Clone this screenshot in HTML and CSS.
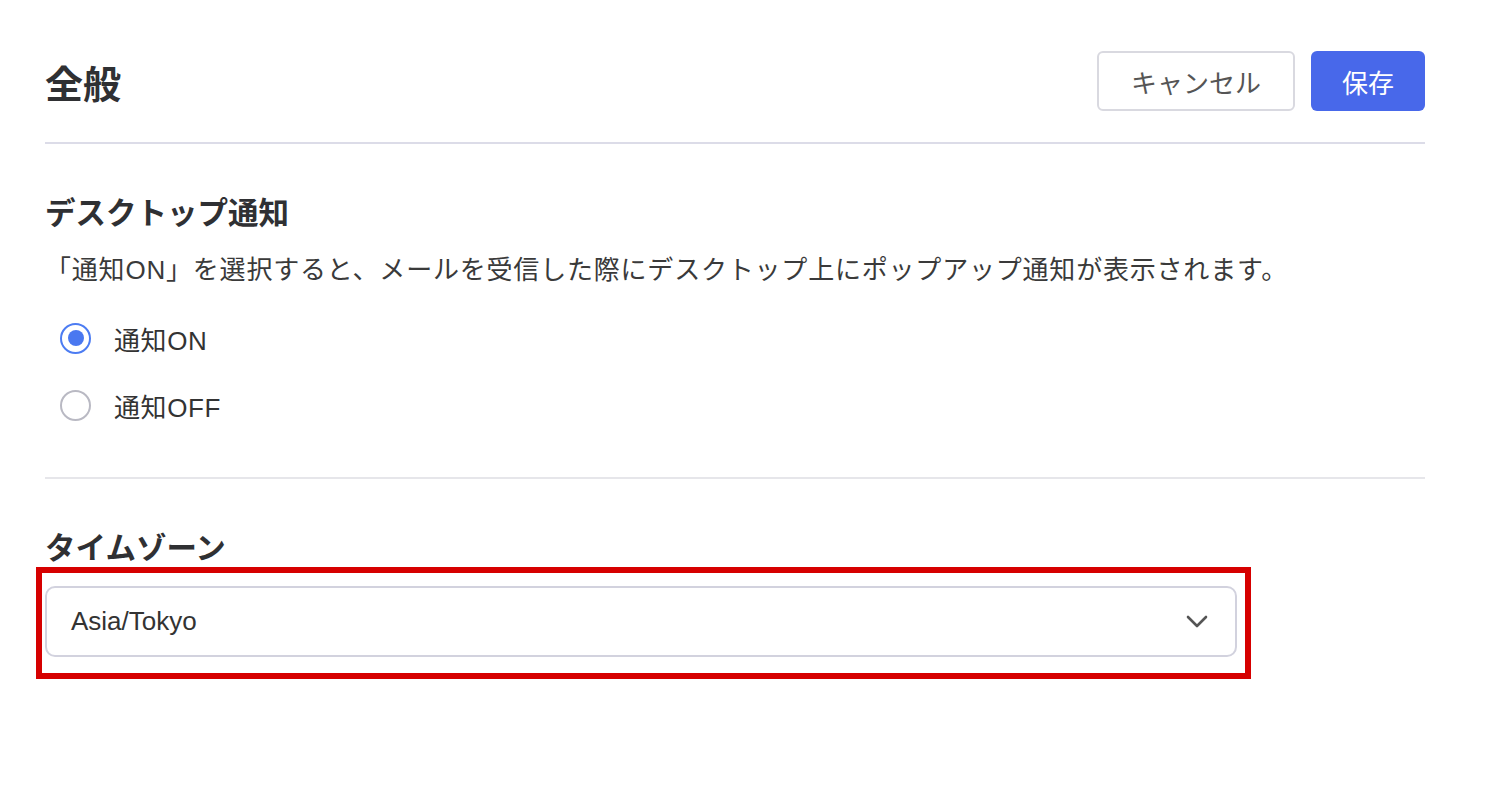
FILE: index.html
```html
<!DOCTYPE html>
<html lang="ja">
<head>
    <meta charset="UTF-8">
    <meta name="viewport" content="width=device-width, initial-scale=1.0">
    <title>全般</title>
    <link rel="stylesheet" href="styles.css">
</head>
<body>
    <main class="settings">
        <header class="settings-header">
            <h1>全般</h1>
            <div class="actions">
                <button type="button" class="btn btn-cancel">キャンセル</button>
                <button type="button" class="btn btn-save">保存</button>
            </div>
        </header>

        <section class="section section-notify">
            <h2>デスクトップ通知</h2>
            <p class="desc">「通知ON」を選択すると、メールを受信した際にデスクトップ上にポップアップ通知が表示されます。</p>
            <label class="radio-row">
                <span class="radio checked"></span>
                <span class="radio-label">通知ON</span>
            </label>
            <label class="radio-row">
                <span class="radio"></span>
                <span class="radio-label">通知OFF</span>
            </label>
        </section>

        <section class="section section-timezone">
            <h2>タイムゾーン</h2>
            <div class="highlight">
                <div class="select">
                    <span class="select-value">Asia/Tokyo</span>
                    <svg class="chevron" width="22" height="14" viewBox="0 0 22 14">
                        <path d="M2 2 L11 11 L20 2" fill="none" stroke="#555" stroke-width="2.6" stroke-linecap="round" stroke-linejoin="round"/>
                    </svg>
                </div>
            </div>
        </section>
    </main>
</body>
</html>
```

FILE: styles.css
```css
body {
    margin: 0;
    padding: 0;
    background: #fff;
    color: #333;
    font-family: "Liberation Sans", "Noto Sans CJK JP", sans-serif;
}

.settings {
    width: 1380px;
    margin-left: 45px;
    padding-top: 51px;
}

.settings-header {
    display: flex;
    justify-content: space-between;
    align-items: center;
    height: 60px;
    padding-bottom: 31px;
    border-bottom: 2px solid #dcdce8;
}

.settings-header h1 {
    margin: 0;
    font-size: 38px;
    font-weight: bold;
    color: #2f3033;
}

.actions {
    display: flex;
    gap: 16px;
}

.btn {
    height: 60px;
    border-radius: 6px;
    font-family: "Noto Sans CJK JP", sans-serif;
    font-size: 26px;
    cursor: pointer;
}

.btn-cancel {
    width: 198px;
    background: #fff;
    color: #555;
    border: 2px solid #d9d9e0;
}

.btn-save {
    width: 114px;
    background: #4868ea;
    color: #fff;
    border: none;
}

.section h2 {
    margin: 0;
    font-family: "Noto Sans CJK JP", sans-serif;
    font-size: 30.5px;
    line-height: 42px;
    font-weight: bold;
    color: #2f3033;
}

.section-notify {
    padding-top: 46px;
    padding-bottom: 52px;
    border-bottom: 2px solid #e6e6ea;
}

.desc {
    margin: 19px 0 29px;
    font-size: 26px;
    line-height: 38px;
    letter-spacing: 0.8px;
    color: #3a3a3a;
}

.radio-row {
    display: flex;
    align-items: center;
    height: 40px;
    margin-left: 15px;
    margin-bottom: 27px;
    gap: 23px;
}

.radio-row:last-child {
    margin-bottom: 0;
}

.radio {
    box-sizing: border-box;
    width: 31px;
    height: 31px;
    border-radius: 50%;
    border: 2px solid #b9b9c3;
    display: flex;
    align-items: center;
    justify-content: center;
}

.radio.checked {
    border-color: #4c7cf2;
}

.radio.checked::after {
    content: "";
    width: 16px;
    height: 16px;
    border-radius: 50%;
    background: #4a78f0;
}

.radio-label {
    font-size: 26px;
    letter-spacing: 0.6px;
    color: #333;
}

.section-timezone {
    padding-top: 46px;
}

.highlight {
    width: 1192px;
    margin-left: -9px;
    padding: 13px 8px 16px 3px;
    border: 6px solid #d60000;
    box-sizing: content-box;
}

.select {
    box-sizing: border-box;
    height: 71px;
    display: flex;
    align-items: center;
    justify-content: space-between;
    padding: 0 27px 0 24px;
    border: 2px solid #d2d2de;
    border-radius: 10px;
    background: #fff;
}

.select-value {
    font-size: 26px;
    color: #333;
}
```
